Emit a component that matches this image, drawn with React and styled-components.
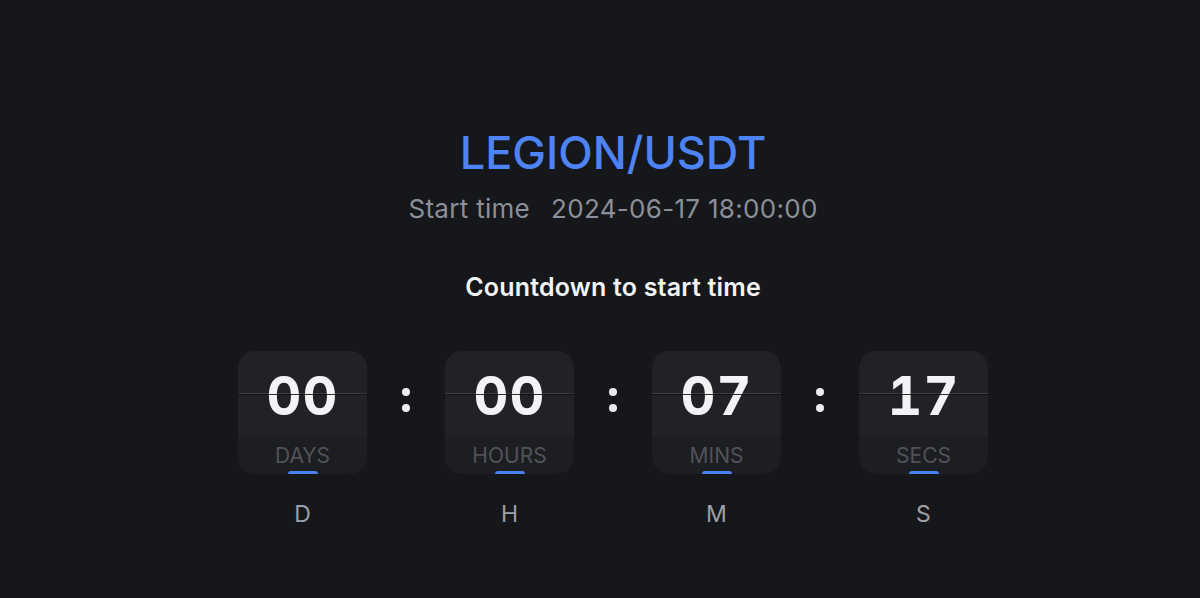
import styled, { createGlobalStyle } from 'styled-components';

const GlobalStyle = createGlobalStyle`
  html, body {
    margin: 0;
    padding: 0;
    background: #16171b;
  }
  body {
    font-family: Inter, 'Noto Sans', 'Liberation Sans', sans-serif;
    -webkit-font-smoothing: antialiased;
  }
`;

const Page = styled.div`
  min-height: 598px;
  box-sizing: border-box;
  padding: 126px 0 0 26px;
  display: flex;
  flex-direction: column;
  align-items: center;
`;

const Pair = styled.h1`
  margin: 0;
  font-size: 45px;
  line-height: 54px;
  font-weight: 500;
  color: #4d83f4;
`;

const StartRow = styled.div`
  margin-top: 14px;
  display: flex;
  gap: 21px;
  font-size: 26px;
  line-height: 30px;
  letter-spacing: 0.3px;
  color: #8c8f97;
`;

const Caption = styled.div`
  margin-top: 48px;
  font-size: 25px;
  line-height: 30px;
  font-weight: 600;
  letter-spacing: 0.2px;
  color: #f2f3f5;
`;

const Clock = styled.div`
  margin-top: 49px;
  display: flex;
  align-items: flex-start;
`;

const Unit = styled.div`
  width: 129px;
  display: flex;
  flex-direction: column;
  align-items: center;
`;

const Card = styled.div`
  position: relative;
  width: 129px;
  height: 123px;
  border-radius: 17px;
  overflow: hidden;
  display: flex;
  flex-direction: column;
  background: #1d1e22;
`;

const Face = styled.div`
  position: relative;
  height: 86px;
  box-sizing: border-box;
  padding-top: 18px;
  background: #212226;
  text-align: center;
  font-size: 54px;
  line-height: 54px;
  font-weight: 700;
  letter-spacing: 1px;
  font-variant-numeric: tabular-nums;
  color: #f2f3f5;
`;

const Hinge = styled.div`
  position: absolute;
  left: 0;
  right: 0;
  top: 42px;
  height: 1px;
  background: rgba(255, 255, 255, 0.12);
  border-bottom: 1px solid rgba(10, 10, 12, 0.85);
`;

const Label = styled.div`
  height: 37px;
  text-align: center;
  font-size: 21px;
  line-height: 37px;
  color: #505258;
`;

const Tab = styled.div`
  position: absolute;
  left: 50%;
  bottom: -1px;
  width: 30px;
  height: 4px;
  margin-left: -15px;
  border-radius: 3px 3px 0 0;
  background: #4b80f2;
`;

const Letter = styled.div`
  margin-top: 26px;
  font-size: 23px;
  line-height: 28px;
  color: #9ca0a8;
`;

const Colon = styled.div`
  width: 78px;
  margin-top: 37px;
  display: flex;
  flex-direction: column;
  align-items: center;
  gap: 8px;

  & > span {
    width: 8px;
    height: 8px;
    border-radius: 50%;
    background: #ececee;
  }
`;

const units = [
  { value: '00', label: 'DAYS', short: 'D' },
  { value: '00', label: 'HOURS', short: 'H' },
  { value: '07', label: 'MINS', short: 'M' },
  { value: '17', label: 'SECS', short: 'S' },
];

const App = () => {
  return (
    <>
      <GlobalStyle />
      <Page>
        <Pair>LEGION/USDT</Pair>
        <StartRow>
          <span>Start time</span>
          <span>2024-06-17 18:00:00</span>
        </StartRow>
        <Caption>Countdown to start time</Caption>
        <Clock>
          {units.map((u, i) => (
            <div key={u.label} style={{ display: 'contents' }}>
              {i > 0 && (
                <Colon>
                  <span />
                  <span />
                </Colon>
              )}
              <Unit>
                <Card>
                  <Face>
                    {u.value}
                    <Hinge />
                  </Face>
                  <Label>{u.label}</Label>
                  <Tab />
                </Card>
                <Letter>{u.short}</Letter>
              </Unit>
            </div>
          ))}
        </Clock>
      </Page>
    </>
  );
};

export default App;
